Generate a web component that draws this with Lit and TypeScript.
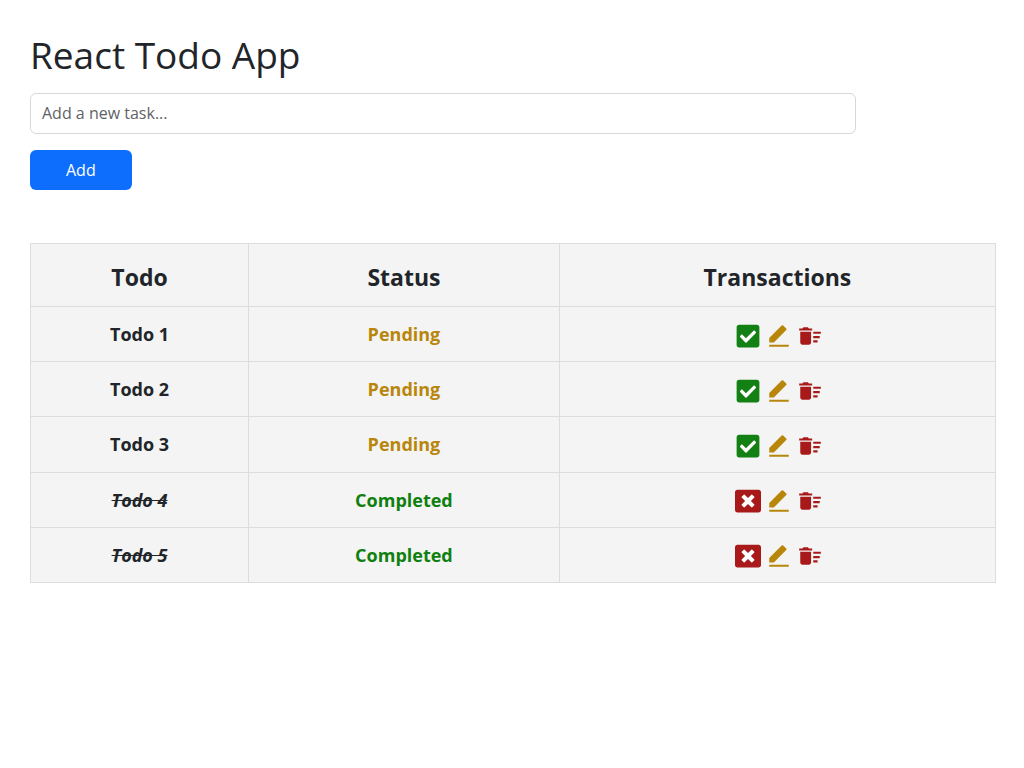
import { LitElement, html, css, svg } from "lit";
import { customElement, state } from "lit/decorators.js";

interface Todo {
  id: number;
  title: string;
  completed: boolean;
}

const checkIcon = svg`<path d="M400 480H48c-26.51 0-48-21.49-48-48V80c0-26.51 21.49-48 48-48h352c26.51 0 48 21.49 48 48v352c0 26.51-21.49 48-48 48zm-204.686-98.059l184-184c6.248-6.248 6.248-16.379 0-22.627l-22.627-22.627c-6.248-6.248-16.379-6.249-22.628 0L184 302.745l-70.059-70.059c-6.248-6.248-16.379-6.248-22.628 0l-22.627 22.627c-6.248 6.248-6.248 16.379 0 22.627l104 104c6.249 6.25 16.379 6.25 22.628.001z"/>`;
const closeIcon = svg`<path d="M464 32H48C21.5 32 0 53.5 0 80v352c0 26.5 21.5 48 48 48h416c26.5 0 48-21.5 48-48V80c0-26.5-21.5-48-48-48zm-83.6 290.5c4.8 4.8 4.8 12.6 0 17.4l-40.5 40.5c-4.8 4.8-12.6 4.8-17.4 0L256 313.3l-66.5 67.1c-4.8 4.8-12.6 4.8-17.4 0l-40.5-40.5c-4.8-4.8-4.8-12.6 0-17.4l67.1-66.5-67.1-66.5c-4.8-4.8-4.8-12.6 0-17.4l40.5-40.5c4.8-4.8 12.6-4.8 17.4 0l66.5 67.1 66.5-67.1c4.8-4.8 12.6-4.8 17.4 0l40.5 40.5c4.8 4.8 4.8 12.6 0 17.4L313.3 256l67.1 66.5z"/>`;
const editIcon = svg`<path d="M7.243 17.997H3v-4.243L14.435 2.319a1 1 0 0 1 1.414 0l2.829 2.828a1 1 0 0 1 0 1.415L7.243 17.997zM3 19.997h18v2H3v-2z"/>`;
const deleteIcon = svg`<path d="M15 16h4v2h-4zm0-8h7v2h-7zm0 4h6v2h-6zM3 18c0 1.1.9 2 2 2h6c1.1 0 2-.9 2-2V8H3v10zM14 5h-3l-1-1H6L5 5H2v2h12z"/>`;

@customElement("app-root")
export class AppRoot extends LitElement {
  static styles = css`
    :host {
      display: block;
      padding: 31px 28px 32px 30px;
      color: #212529;
      font-family: "Segoe UI", "Open Sans", "Noto Sans", sans-serif;
      font-size: 16px;
      line-height: 24px;
    }
    * {
      box-sizing: border-box;
    }
    .title {
      margin: 0 0 14px;
      font-size: 37px;
      font-weight: 400;
      line-height: 48px;
    }
    .form {
      display: flex;
      flex-direction: column;
      align-items: flex-start;
      gap: 16px;
      margin: 0 0 53px;
    }
    .field {
      width: 85.5%;
      height: 41px;
      padding: 0 11px 1px;
      border: 1px solid #d6d8da;
      border-radius: 6px;
      background: #fff;
      color: inherit;
      font: inherit;
    }
    .field::placeholder {
      color: #5f6367;
      opacity: 1;
    }
    .add {
      padding: 8px 36px;
      border: 0;
      border-radius: 6px;
      background: #0d6efd;
      color: #fff;
      font: inherit;
    }
    .table {
      width: 100%;
      height: 340px;
      border-collapse: collapse;
      table-layout: fixed;
      background: #f4f4f4;
      font-size: 18px;
      font-weight: 700;
      text-align: center;
    }
    .table th,
    .table td {
      height: 55px;
      padding: 0;
      border: 1px solid #dcdddd;
    }
    .table th {
      height: 63px;
      padding-top: 4px;
      font-size: 23px;
    }
    .todo-col {
      width: 22.6%;
    }
    .status-col {
      width: 32.2%;
    }
    .done {
      font-style: italic;
      text-decoration: line-through;
    }
    .pending {
      color: #b8860b;
    }
    .completed {
      color: #0f800f;
    }
    .actions {
      display: flex;
      justify-content: center;
      gap: 5px;
      padding: 3px 0 0 4px;
    }
    .action {
      display: block;
      padding: 0;
      border: 0;
      background: none;
      color: #a81a1a;
      cursor: pointer;
    }
    .action.check {
      color: #138013;
    }
    .action.edit {
      color: #b8860b;
    }
    .icon {
      display: block;
      width: 26px;
      height: 26px;
      fill: currentColor;
    }
    .check .icon,
    .close .icon {
      background: linear-gradient(#fff, #fff) center / 16px 16px no-repeat;
    }
  `;

  @state() private todos: Todo[] = [1, 2, 3, 4, 5].map((id) => ({
    id,
    title: `Todo ${id}`,
    completed: id > 3,
  }));

  private add(e: Event) {
    e.preventDefault();
    const field = this.renderRoot.querySelector<HTMLInputElement>(".field")!;
    const title = field.value.trim();
    if (!title) return;
    this.todos = [...this.todos, { id: Date.now(), title, completed: false }];
    field.value = "";
  }

  private toggle(id: number) {
    this.todos = this.todos.map((t) => (t.id === id ? { ...t, completed: !t.completed } : t));
  }

  private remove(id: number) {
    this.todos = this.todos.filter((t) => t.id !== id);
  }

  private edit(id: number) {
    const field = this.renderRoot.querySelector<HTMLInputElement>(".field")!;
    field.value = this.todos.find((t) => t.id === id)?.title ?? "";
    this.remove(id);
    field.focus();
  }

  private row(t: Todo) {
    return html`<tr>
      <td class=${t.completed ? "done" : ""}>${t.title}</td>
      <td class=${t.completed ? "completed" : "pending"}>${t.completed ? "Completed" : "Pending"}</td>
      <td>
        <div class="actions">
          <button class="action ${t.completed ? "close" : "check"}" aria-label="Toggle ${t.title}" @click=${() => this.toggle(t.id)}>
            <svg class="icon" viewBox=${t.completed ? "0 0 512 512" : "0 0 448 512"}>${t.completed ? closeIcon : checkIcon}</svg>
          </button>
          <button class="action edit" aria-label="Edit ${t.title}" @click=${() => this.edit(t.id)}>
            <svg class="icon" viewBox="0 0 24 24">${editIcon}</svg>
          </button>
          <button class="action" aria-label="Delete ${t.title}" @click=${() => this.remove(t.id)}>
            <svg class="icon" viewBox="0 0 24 24">${deleteIcon}</svg>
          </button>
        </div>
      </td>
    </tr>`;
  }

  render() {
    return html`
      <h1 class="title">React Todo App</h1>
      <form class="form" @submit=${this.add}>
        <input class="field" type="text" aria-label="New task" placeholder="Add a new task..." />
        <button class="add" type="submit">Add</button>
      </form>
      <table class="table">
        <thead>
          <tr>
            <th class="todo-col">Todo</th>
            <th class="status-col">Status</th>
            <th>Transactions</th>
          </tr>
        </thead>
        <tbody>
          ${this.todos.map((t) => this.row(t))}
        </tbody>
      </table>
    `;
  }
}
